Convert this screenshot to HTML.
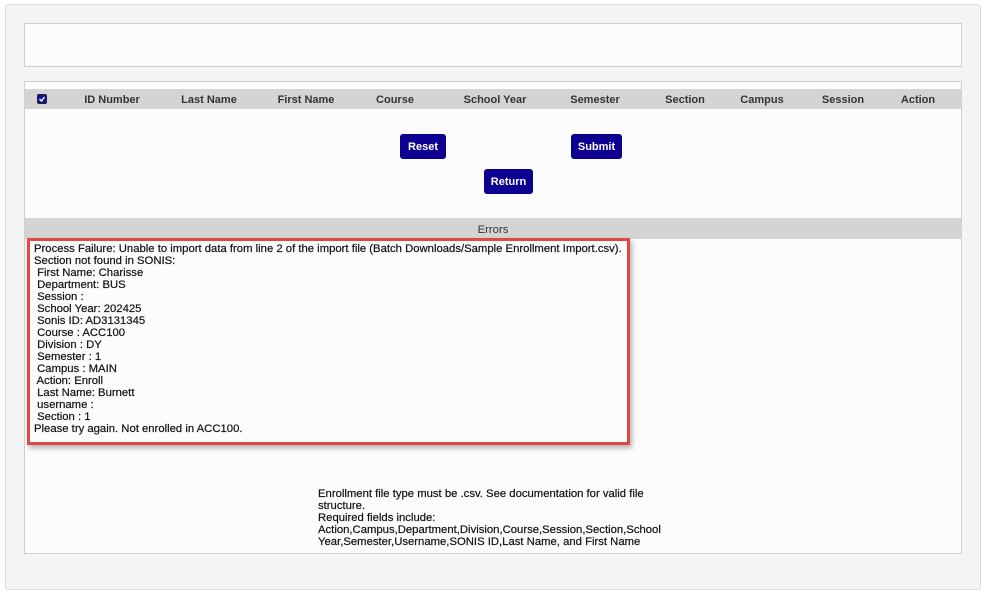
<!DOCTYPE html>
<html><head><style>
body{margin:0;width:984px;height:595px;background:#fff;font-family:"Liberation Sans",Arial,sans-serif;font-size:11.3px;color:#111;position:relative;overflow:hidden}
.abs{position:absolute}
.outer{left:5px;top:4px;width:974px;height:584px;background:#f4f4f4;border:1px solid #dcdcdc;border-radius:3px}
.box1{left:24px;top:23px;width:936px;height:42px;background:#fcfcfc;border:1px solid #d0d0d0}
.box2{left:24px;top:81px;width:936px;height:471px;background:#fcfcfc;border:1px solid #d0d0d0}
.hdr{left:25px;top:89px;width:936px;height:20px;background:#d4d4d4;font-weight:bold;font-size:11px;color:#333}
.hdr span{position:absolute;top:5px;transform:translateX(-50%);white-space:nowrap}
.btn{background:#0d0090;color:#fff;font-weight:bold;font-size:11px;border-radius:3px;text-align:center;line-height:27px;height:25px}
.err{left:25px;top:218px;width:936px;height:21px;background:#d4d4d4;text-align:center;line-height:24px;color:#333}
.red{left:27px;top:238px;width:597px;height:201px;border:3px solid #e04848;box-shadow:2px 3px 5px rgba(0,0,0,.3);background:#fcfcfc}
.txt{left:34px;top:243px;line-height:12px;white-space:pre;font-size:11.3px;color:#111;-webkit-text-stroke:.2px #111}
.bot{left:318px;top:488px;line-height:12px;width:350px;font-size:11.3px;color:#111;-webkit-text-stroke:.2px #111}
</style></head><body>
<div class="abs outer"></div>
<div class="abs box1"></div>
<div class="abs box2"></div>
<div class="abs hdr">
<span style="left:17px;top:5px"><svg width="10" height="10"><rect x=".5" y=".5" width="9" height="9" rx="1.5" fill="#10109a" stroke="#222"/><path d="M2.5 5l2 2 3-4" stroke="#fff" stroke-width="1.4" fill="none"/></svg></span>
<span style="left:87px">ID Number</span>
<span style="left:184px">Last Name</span>
<span style="left:281px">First Name</span>
<span style="left:370px">Course</span>
<span style="left:470px">School Year</span>
<span style="left:570px">Semester</span>
<span style="left:660px">Section</span>
<span style="left:737px">Campus</span>
<span style="left:818px">Session</span>
<span style="left:893px">Action</span>
</div>
<div class="abs btn" style="left:400px;top:134px;width:46px">Reset</div>
<div class="abs btn" style="left:571px;top:134px;width:51px">Submit</div>
<div class="abs btn" style="left:484px;top:169px;width:49px">Return</div>
<div class="abs err">Errors</div>
<div class="abs red"></div>
<div class="abs txt">Process Failure: Unable to import data from line 2 of the import file (Batch Downloads/Sample Enrollment Import.csv).
Section not found in SONIS:
 First Name: Charisse
 Department: BUS
 Session :
 School Year: 202425
 Sonis ID: AD3131345
 Course : ACC100
 Division : DY
 Semester : 1
 Campus : MAIN
 Action: Enroll
 Last Name: Burnett
 username :
 Section : 1
Please try again. Not enrolled in ACC100.</div>
<div class="abs bot">Enrollment file type must be .csv. See documentation for valid file structure.<br>Required fields include:<br>Action,Campus,Department,Division,Course,Session,Section,School Year,Semester,Username,SONIS ID,Last Name, and First Name</div>
</body></html>
